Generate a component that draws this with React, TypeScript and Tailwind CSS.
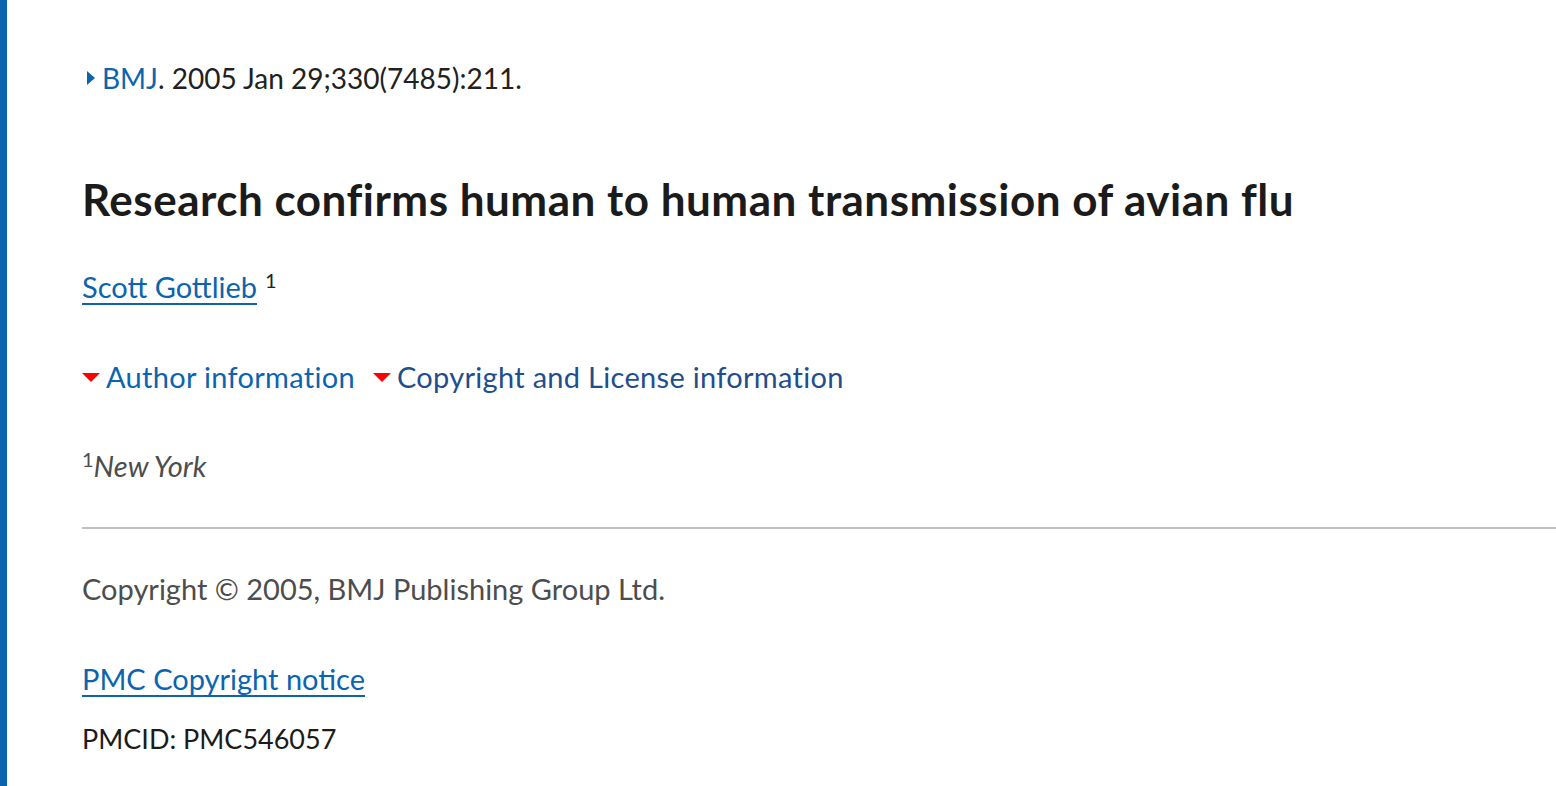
import React from "react";

export default function App() {
  const font = { fontFamily: '"Source Sans Pro", Lato, "Noto Sans", sans-serif' };
  return (
    <div className="min-h-[786px] w-full bg-white border-l-[7px] border-[#0b64ad] text-[#212121]" style={font}>
      <div className="pl-[75px] pt-[58px]">
        <div className="flex items-center text-[28px] leading-[40px]">
          <span className="mr-[7px] ml-[5px] inline-block w-0 h-0 border-y-[7px] border-y-transparent border-l-[8px] border-l-[#0b64ad]" />
          <a className="text-[#0b64ad]">BMJ</a>
          <span>. 2005 Jan 29;330(7485):211.</span>
        </div>
        <h1 className="mt-[75px] text-[44px] leading-[52px] font-bold tracking-[0.5px] text-[#1b1b1b]">
          Research confirms human to human transmission of avian flu
        </h1>
        <div className="mt-[42px] text-[29px] leading-[40px]">
          <a className="text-[#0b64ad] underline underline-offset-[5px] decoration-2">Scott Gottlieb</a>
          <sup className="ml-[8px] text-[20px]">1</sup>
        </div>
        <div className="mt-[50px] flex items-center text-[29px] leading-[40px] tracking-[0.3px]">
          <span className="mr-[6px] inline-block w-0 h-0 border-x-[9px] border-x-transparent border-t-[9px] border-t-[#ff0000]" />
          <a className="text-[#0b64ad]">Author information</a>
          <span className="ml-[18px] mr-[6px] inline-block w-0 h-0 border-x-[9px] border-x-transparent border-t-[9px] border-t-[#ff0000]" />
          <a className="text-[#1f4e8c]">Copyright and License information</a>
        </div>
        <div className="mt-[49px] text-[29px] leading-[40px] text-[#4d4d4d]">
          <sup className="text-[20px]">1</sup>
          <i>New York</i>
        </div>
        <hr className="mt-[41px] border-t-2 border-[#c0c0c0]" />
        <div className="mt-[40px] text-[29px] leading-[40px] text-[#4d4d4d]">
          Copyright © 2005, BMJ Publishing Group Ltd.
        </div>
        <div className="mt-[50px] text-[29px] leading-[40px]">
          <a className="text-[#0b64ad] underline underline-offset-[5px] decoration-2">PMC Copyright notice</a>
        </div>
        <div className="mt-[20px] text-[27px] leading-[40px] text-[#1b1b1b]">PMCID: PMC546057</div>
      </div>
    </div>
  );
}
